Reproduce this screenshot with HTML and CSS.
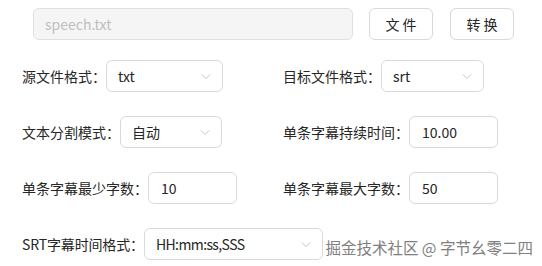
FILE: index.html
```html
<!doctype html>
<html>
<head>
<meta charset="utf-8">
<title>字幕转换</title>
<link rel="stylesheet" href="styles.css">
</head>

<body>
<div class="page">
	<div class="fileBar">
		<input class="fileInput" type="text" placeholder="speech.txt" disabled>
		<button class="btn">文 件</button>
		<button class="btn">转 换</button>
	</div>

	<div class="form">
		<div class="item">
			<label>源文件格式：</label>
			<div class="select w117"><span>txt</span><svg class="arrow" viewBox="0 0 12 8"><path d="M1 1.5 L6 6.5 L11 1.5"/></svg></div>
		</div>
		<div class="item">
			<label>目标文件格式：</label>
			<div class="select w103"><span>srt</span><svg class="arrow" viewBox="0 0 12 8"><path d="M1 1.5 L6 6.5 L11 1.5"/></svg></div>
		</div>

		<div class="item">
			<label>文本分割模式：</label>
			<div class="select w102"><span>自动</span><svg class="arrow" viewBox="0 0 12 8"><path d="M1 1.5 L6 6.5 L11 1.5"/></svg></div>
		</div>
		<div class="item">
			<label>单条字幕持续时间：</label>
			<input class="num" type="text" value="10.00">
		</div>

		<div class="item">
			<label>单条字幕最少字数：</label>
			<input class="num" type="text" value="10">
		</div>
		<div class="item">
			<label>单条字幕最大字数：</label>
			<input class="num" type="text" value="50">
		</div>

		<div class="item wide">
			<label class="narrow">SRT字幕时间格式：</label>
			<div class="select w179"><span class="fmt">HH:mm:ss,SSS</span><svg class="arrow" viewBox="0 0 12 8"><path d="M1 1.5 L6 6.5 L11 1.5"/></svg></div>
		</div>
	</div>

	<div class="mark">掘金技术社区 @ 字节幺零二四</div>
</div>
</body>
</html>
```

FILE: styles.css
```css
body{
	margin: 0;
	font-family: "Noto Sans CJK SC", sans-serif;
	font-size: 14px;
	color: #262626;
	background: #ffffff;
}

.page{
	position: relative;
	width: 542px;
	height: 266px;
	box-sizing: border-box;
	padding: 8px 0 0 22px;
}

.fileBar{
	display: flex;
	gap: 16px;
	padding-left: 11px;
}

.fileInput{
	width: 320px;
	height: 32px;
	box-sizing: border-box;
	padding: 0 11px;
	border: 1px solid #e0e0e0;
	border-radius: 6px;
	background: #f5f5f5;
	font-family: inherit;
	font-size: 14px;
}

.fileInput::placeholder{
	color: #bfbfbf;
}

.btn{
	width: 64px;
	height: 32px;
	border: 1px solid #d9d9d9;
	border-radius: 6px;
	background: #ffffff;
	font-family: inherit;
	font-size: 14px;
	color: #262626;
	padding: 0;
}

.btn + .btn{
	margin-left: 1px;
}

.form{
	display: grid;
	grid-template-columns: 261px auto;
	row-gap: 24px;
	margin-top: 20px;
}

.item{
	display: flex;
	align-items: center;
	height: 32px;
}

.wide{
	grid-column: 1 / span 2;
}

label{
	white-space: nowrap;
}

.narrow{
	letter-spacing: -0.15px;
}

.select{
	flex-shrink: 0;
	height: 32px;
	box-sizing: border-box;
	border: 1px solid #d9d9d9;
	border-radius: 6px;
	padding: 0 11px;
	display: flex;
	align-items: center;
	justify-content: space-between;
}

.fmt{
	letter-spacing: -0.6px;
}

.arrow{
	width: 10px;
	height: 7px;
	fill: none;
	stroke: #c4c4c4;
	stroke-width: 1.2;
}

.w117{ width: 117px; }
.w103{ width: 103px; }
.w102{ width: 102px; }
.w179{ width: 179px; }

.num{
	width: 89px;
	height: 32px;
	box-sizing: border-box;
	border: 1px solid #d9d9d9;
	border-radius: 6px;
	padding: 0 12px;
	font-family: inherit;
	font-size: 14px;
	color: #262626;
}

.mark{
	position: absolute;
	right: 9px;
	bottom: 8px;
	font-size: 15.5px;
	color: #808080;
	text-shadow: 0 0 1px #ffffff;
}
```
